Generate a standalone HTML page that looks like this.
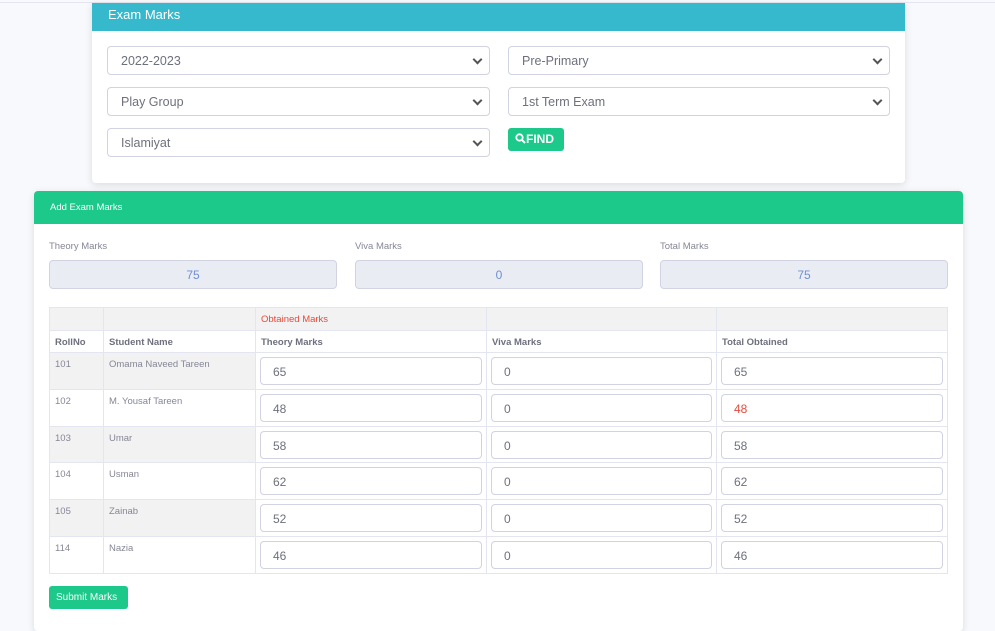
<!DOCTYPE html>
<html><head><style>
*{box-sizing:border-box;margin:0;padding:0}
body{width:995px;height:621px;overflow:hidden;background:#f8f9fc;font-family:"Liberation Sans",sans-serif;position:relative}
.topline{position:absolute;left:0;top:2px;width:995px;height:1px;background:#e3e6f0}
.card1{position:absolute;left:92px;top:3px;width:813px;height:180px;background:#fff;box-shadow:0 2px 8px rgba(0,0,0,.12);border-radius:0 0 4px 4px}
.h1{height:28px;background:#36b9cc;color:#fff;font-size:13px;padding:4px 0 0 16px}
.sel{position:absolute;height:29px;border:1px solid #d1d3e2;border-radius:4px;font-size:12.5px;color:#6e707e;padding:7px 0 0 13px;background:#fff}
.sel:after{content:"";position:absolute;right:8px;top:9px;width:5px;height:5px;border-right:2px solid #555;border-bottom:2px solid #555;transform:rotate(45deg)}
.find{position:absolute;left:416px;top:125px;width:56px;height:23px;background:#1cc88a;border-radius:3px;color:#fff;font-weight:bold;font-size:12px;padding:4px 0 0 7px}
.card2{position:absolute;left:34px;top:191px;width:929px;height:440px;background:#fff;box-shadow:0 2px 8px rgba(0,0,0,.12);border-radius:4px}
.h2{height:33px;background:#1cc88a;color:#fff;font-size:9.5px;padding:11px 0 0 16px;border-radius:4px 4px 0 0}
.lbl{position:absolute;top:50px;font-size:9.5px;color:#858796}
.box{position:absolute;top:69px;width:288px;height:29px;background:#eaecf4;border:1px solid #d1d3e2;border-radius:4px;text-align:center;font-size:12px;color:#6e8fcf;padding-top:7px}
table{position:absolute;left:15px;top:116px;border-collapse:collapse;font-size:9.5px;color:#858796}
td{border:1px solid #e3e6f0;vertical-align:top;padding:0 5px}
.hd td{height:23px;padding-top:6px}
.hd.b td{font-weight:bold;color:#6e707e;height:22px}
.r td{height:36.8px;padding-top:6px}
.r.g td.s{background:#f2f2f2}
.r td.i{padding:4px 4px 0 4px}
.in{height:28px;border:1px solid #d1d3e2;border-radius:4px;font-size:12px;color:#6e707e;padding:7px 0 0 12px}
.btn{position:absolute;left:15px;top:395px;width:79px;height:23px;background:#1cc88a;border-radius:3px;color:#fff;font-size:10px;padding:6px 0 0 7px}
</style></head><body>
<div class="topline"></div>
<div class="card1">
<div class="h1">Exam Marks</div>
<div class="sel" style="left:15px;top:43px;width:383px">2022-2023</div>
<div class="sel" style="left:416px;top:43px;width:382px">Pre-Primary</div>
<div class="sel" style="left:15px;top:84px;width:383px">Play Group</div>
<div class="sel" style="left:416px;top:84px;width:382px">1st Term Exam</div>
<div class="sel" style="left:15px;top:125px;width:383px">Islamiyat</div>
<div class="find"><svg width="11" height="11" viewBox="0 0 11 11" style="vertical-align:-1px"><circle cx="4.5" cy="4.5" r="3.2" fill="none" stroke="#fff" stroke-width="1.8"/><path d="M7 7l3 3" stroke="#fff" stroke-width="2"/></svg>FIND</div>
</div>
<div class="card2">
<div class="h2">Add Exam Marks</div>
<div class="lbl" style="left:15px">Theory Marks</div>
<div class="lbl" style="left:321px">Viva Marks</div>
<div class="lbl" style="left:626px">Total Marks</div>
<div class="box" style="left:15px">75</div>
<div class="box" style="left:321px">0</div>
<div class="box" style="left:626px">75</div>
<table>
<colgroup><col style="width:54px"><col style="width:152px"><col style="width:231px"><col style="width:230px"><col style="width:231px"></colgroup>
<tr class="hd" style="background:#f2f2f2"><td></td><td></td><td style="color:#e74a3b">Obtained Marks</td><td style="border-left-color:#f2f2f2"></td><td style="border-left-color:#f2f2f2"></td></tr>
<tr class="hd b"><td>RollNo</td><td>Student Name</td><td>Theory Marks</td><td>Viva Marks</td><td>Total Obtained</td></tr>
<tr class="r g"><td class="s">101</td><td class="s">Omama Naveed Tareen</td><td class="i"><div class="in">65</div></td><td class="i"><div class="in">0</div></td><td class="i"><div class="in">65</div></td></tr>
<tr class="r"><td class="s">102</td><td class="s">M. Yousaf Tareen</td><td class="i"><div class="in">48</div></td><td class="i"><div class="in">0</div></td><td class="i"><div class="in" style="color:#e74a3b">48</div></td></tr>
<tr class="r g"><td class="s">103</td><td class="s">Umar</td><td class="i"><div class="in">58</div></td><td class="i"><div class="in">0</div></td><td class="i"><div class="in">58</div></td></tr>
<tr class="r"><td class="s">104</td><td class="s">Usman</td><td class="i"><div class="in">62</div></td><td class="i"><div class="in">0</div></td><td class="i"><div class="in">62</div></td></tr>
<tr class="r g"><td class="s">105</td><td class="s">Zainab</td><td class="i"><div class="in">52</div></td><td class="i"><div class="in">0</div></td><td class="i"><div class="in">52</div></td></tr>
<tr class="r"><td class="s">114</td><td class="s">Nazia</td><td class="i"><div class="in">46</div></td><td class="i"><div class="in">0</div></td><td class="i"><div class="in">46</div></td></tr>
</table>
<div class="btn">Submit Marks</div>
</div>
</body></html>
